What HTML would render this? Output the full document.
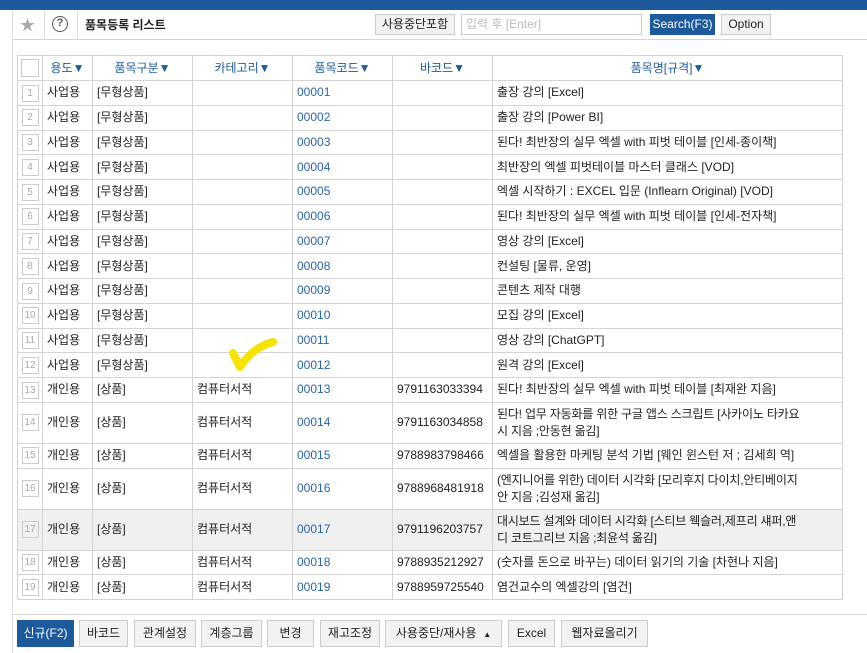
<!DOCTYPE html><html><head><meta charset="utf-8"><style>
*{box-sizing:border-box;margin:0;padding:0}
body{width:867px;height:653px;overflow:hidden;background:#fff;font-family:"Liberation Sans","Noto Sans CJK KR",sans-serif;font-size:12px;color:#222;position:relative}
.top{position:absolute;left:0;top:0;width:867px;height:10px;background:#1d5a9c}
.vl{position:absolute;left:12px;top:10px;width:1px;height:643px;background:#ddd}
.hl{position:absolute;left:12px;height:1px;width:855px;background:#d6d6d6}
.btn{position:absolute;height:24px;border:1px solid #ccc;background:#f2f2f2;line-height:22px;text-align:center;font-size:12px;color:#222}
.blue{background:#1d5a9c;border-color:#1d5a9c;color:#fff}
table{position:absolute;left:17px;top:55px;width:826px;border-collapse:collapse;table-layout:fixed}
td,th{border:1px solid #d4d4d4;padding:0 4px;white-space:nowrap;overflow:hidden;font-weight:normal;line-height:17px;vertical-align:middle}
th{height:25px;color:#1d5a9c;font-size:12px;text-align:center}
td{height:24.75px}
.c{color:#2a65a8}
.num{text-align:center;padding:0}
.nb{display:inline-block;width:17px;height:17px;border:1px solid #ccc;color:#aaa;font-size:10px;line-height:15px;text-align:center;vertical-align:middle}
.w{white-space:normal;letter-spacing:-0.2px}
tr.g td{background:#f0f0f0}
</style></head><body>
<div class="top"></div>
<div class="vl"></div>
<div style="position:absolute;left:20px;top:14px;color:#aaa;font-size:15px">★</div>
<div style="position:absolute;left:44px;top:10px;width:1px;height:30px;background:#ddd"></div>
<div style="position:absolute;left:52px;top:16px;width:16px;height:16px;border:1.5px solid #555;border-radius:50%;font-size:11px;line-height:13px;text-align:center;color:#555;font-weight:bold">?</div>
<div style="position:absolute;left:77px;top:10px;width:1px;height:30px;background:#ddd"></div>
<div style="position:absolute;left:85px;top:16px;font-size:12px;font-weight:bold">품목등록 리스트</div>
<div class="btn" style="left:375px;top:14px;width:80px;height:21px;line-height:19px">사용중단포함</div>
<div style="position:absolute;left:461px;top:14px;width:181px;height:21px;border:1px solid #ccc;color:#bbb;padding-left:4px;line-height:19px">입력 후 [Enter]</div>
<div class="btn blue" style="left:650px;top:14px;width:65px;height:21px;line-height:19px">Search(F3)</div>
<div class="btn" style="left:721px;top:14px;width:50px;height:21px;line-height:19px">Option</div>
<div class="hl" style="top:39px"></div>
<table>
<colgroup><col style="width:25px"><col style="width:50px"><col style="width:100px"><col style="width:100px"><col style="width:100px"><col style="width:100px"><col></colgroup>
<tr><th class="num"><span class="nb" style="width:18px;height:18px"></span></th><th>용도▼</th><th>품목구분▼</th><th>카테고리▼</th><th>품목코드▼</th><th>바코드▼</th><th>품목명[규격]▼</th></tr>
<tr><td class="num"><span class="nb">1</span></td><td>사업용</td><td>[무형상품]</td><td></td><td class="c">00001</td><td></td><td>출장 강의 [Excel]</td></tr>
<tr><td class="num"><span class="nb">2</span></td><td>사업용</td><td>[무형상품]</td><td></td><td class="c">00002</td><td></td><td>출장 강의 [Power BI]</td></tr>
<tr><td class="num"><span class="nb">3</span></td><td>사업용</td><td>[무형상품]</td><td></td><td class="c">00003</td><td></td><td>된다! 최반장의 실무 엑셀 with 피벗 테이블 [인세-종이책]</td></tr>
<tr><td class="num"><span class="nb">4</span></td><td>사업용</td><td>[무형상품]</td><td></td><td class="c">00004</td><td></td><td>최반장의 엑셀 피벗테이블 마스터 클래스 [VOD]</td></tr>
<tr><td class="num"><span class="nb">5</span></td><td>사업용</td><td>[무형상품]</td><td></td><td class="c">00005</td><td></td><td>엑셀 시작하기 : EXCEL 입문 (Inflearn Original) [VOD]</td></tr>
<tr><td class="num"><span class="nb">6</span></td><td>사업용</td><td>[무형상품]</td><td></td><td class="c">00006</td><td></td><td>된다! 최반장의 실무 엑셀 with 피벗 테이블 [인세-전자책]</td></tr>
<tr><td class="num"><span class="nb">7</span></td><td>사업용</td><td>[무형상품]</td><td></td><td class="c">00007</td><td></td><td>영상 강의 [Excel]</td></tr>
<tr><td class="num"><span class="nb">8</span></td><td>사업용</td><td>[무형상품]</td><td></td><td class="c">00008</td><td></td><td>컨설팅 [물류, 운영]</td></tr>
<tr><td class="num"><span class="nb">9</span></td><td>사업용</td><td>[무형상품]</td><td></td><td class="c">00009</td><td></td><td>콘텐츠 제작 대행</td></tr>
<tr><td class="num"><span class="nb">10</span></td><td>사업용</td><td>[무형상품]</td><td></td><td class="c">00010</td><td></td><td>모집 강의 [Excel]</td></tr>
<tr><td class="num"><span class="nb">11</span></td><td>사업용</td><td>[무형상품]</td><td></td><td class="c">00011</td><td></td><td>영상 강의 [ChatGPT]</td></tr>
<tr><td class="num"><span class="nb">12</span></td><td>사업용</td><td>[무형상품]</td><td></td><td class="c">00012</td><td></td><td>원격 강의 [Excel]</td></tr>
<tr><td class="num"><span class="nb">13</span></td><td>개인용</td><td>[상품]</td><td>컴퓨터서적</td><td class="c">00013</td><td>9791163033394</td><td>된다! 최반장의 실무 엑셀 with 피벗 테이블 [최재완 지음]</td></tr>
<tr style="height:41px"><td class="num"><span class="nb">14</span></td><td>개인용</td><td>[상품]</td><td>컴퓨터서적</td><td class="c">00014</td><td>9791163034858</td><td class="w">된다! 업무 자동화를 위한 구글 앱스 스크립트 [사카이노 타카요<br>시 지음 ;안동현 옮김]</td></tr>
<tr><td class="num"><span class="nb">15</span></td><td>개인용</td><td>[상품]</td><td>컴퓨터서적</td><td class="c">00015</td><td>9788983798466</td><td>엑셀을 활용한 마케팅 분석 기법 [웨인 윈스턴 저 ; 김세희 역]</td></tr>
<tr style="height:41px"><td class="num"><span class="nb">16</span></td><td>개인용</td><td>[상품]</td><td>컴퓨터서적</td><td class="c">00016</td><td>9788968481918</td><td class="w">(엔지니어를 위한) 데이터 시각화 [모리후지 다이치,안티베이지<br>안 지음 ;김성재 옮김]</td></tr>
<tr class="g" style="height:41px"><td class="num"><span class="nb">17</span></td><td>개인용</td><td>[상품]</td><td>컴퓨터서적</td><td class="c">00017</td><td>9791196203757</td><td class="w">대시보드 설계와 데이터 시각화 [스티브 웩슬러,제프리 섀퍼,앤<br>디 코트그리브 지음 ;최윤석 옮김]</td></tr>
<tr><td class="num"><span class="nb">18</span></td><td>개인용</td><td>[상품]</td><td>컴퓨터서적</td><td class="c">00018</td><td>9788935212927</td><td>(숫자를 돈으로 바꾸는) 데이터 읽기의 기술 [차현나 지음]</td></tr>
<tr><td class="num"><span class="nb">19</span></td><td>개인용</td><td>[상품]</td><td>컴퓨터서적</td><td class="c">00019</td><td>9788959725540</td><td>염건교수의 엑셀강의 [염건]</td></tr>
</table>
<svg style="position:absolute;left:225px;top:335px" width="55" height="40"><path d="M8 18 L15 32 Q28 12 48 7" stroke="#f5e400" stroke-width="8" fill="none" stroke-linecap="round" stroke-linejoin="round"/></svg>
<div class="hl" style="top:614px"></div>
<div class="btn blue" style="left:17px;top:620px;width:57px;height:27px;line-height:25px">신규(F2)</div>
<div class="btn" style="left:79px;top:620px;width:49px;height:27px;line-height:25px">바코드</div>
<div class="btn" style="left:134px;top:620px;width:62px;height:27px;line-height:25px">관계설정</div>
<div class="btn" style="left:201px;top:620px;width:61px;height:27px;line-height:25px">계층그룹</div>
<div class="btn" style="left:267px;top:620px;width:47px;height:27px;line-height:25px">변경</div>
<div class="btn" style="left:320px;top:620px;width:60px;height:27px;line-height:25px">재고조정</div>
<div class="btn" style="left:385px;top:620px;width:117px;height:27px;line-height:25px">사용중단/재사용 &nbsp;<span style="font-size:8px">▲</span></div>
<div class="btn" style="left:508px;top:620px;width:47px;height:27px;line-height:25px">Excel</div>
<div class="btn" style="left:561px;top:620px;width:87px;height:27px;line-height:25px">웹자료올리기</div>
</body></html>
